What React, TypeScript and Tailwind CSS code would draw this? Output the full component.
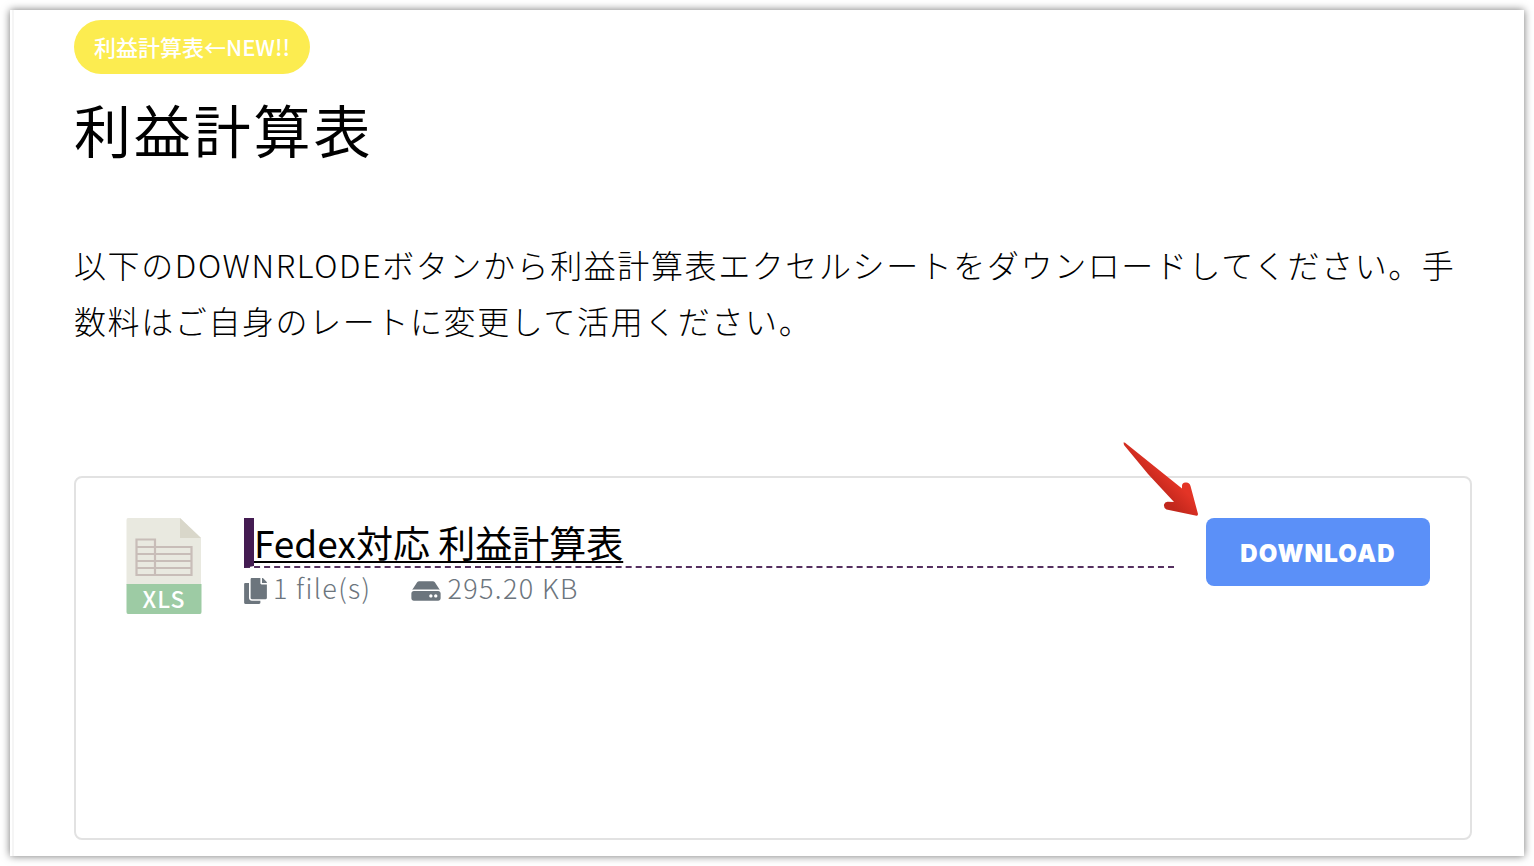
import { FaCopy, FaHdd } from "react-icons/fa";

function XlsIcon() {
  return (
    <svg viewBox="0 0 96 96" className="size-24 shrink-0 overflow-visible" role="img" aria-label="XLS">
      <path d="M12 0H64L85 20V67H10.500V2Q10.500 0 12 0Z" fill="#e9e9e0" />
      <path d="M64 0L85 20H64Z" fill="#d9d7ca" />
      <path d="M10.500 66H85.500V94Q85.500 96 84 96H12Q10.500 96 10.500 94Z" fill="#9dcba4" />
      <g fill="none" stroke="#c8bdb8" strokeWidth="2.200">
        <path d="M20.500 21.500H39V57H20.500Z" />
        <path d="M39 29H75.500V57H39" />
        <path d="M20.500 29H39M20.500 36H75.500M20.500 43H75.500M20.500 50H75.500" />
      </g>
      <text
        x="48"
        y="90"
        textAnchor="middle"
        fill="#ffffff"
        fontSize="23"
        fontWeight="500"
        fontFamily="'Noto Sans CJK JP', sans-serif"
        letterSpacing="1"
      >
        XLS
      </text>
    </svg>
  );
}

function Arrow() {
  return (
    <svg viewBox="0 0 80 80" className="absolute -top-[38px] right-[270px] size-20" aria-hidden="true">
      <defs>
        <linearGradient id="arrow-red" gradientUnits="userSpaceOnUse" x1="44" y1="58" x2="58" y2="44">
          <stop offset="0" stopColor="#c1271c" />
          <stop offset="1" stopColor="#e33426" />
        </linearGradient>
      </defs>
      <path
        d="M3.500 2.500Q5 2 6 3.500L62 48.500L62 46Q62 42.500 65.500 42.500Q69.500 42 70.500 46L78 74Q78 76 76.500 75.800L46.500 69.500Q43.500 68 44 64.500Q45 61.500 48 61.800L54 62L28 34L4 5Z"
        fill="url(#arrow-red)"
      />
    </svg>
  );
}

export default function App() {
  return (
    <div className="p-[10px] font-['Noto_Sans_CJK_JP',sans-serif] text-black" lang="ja">
      <main className="border-l-2 border-white bg-white pt-[10px] pr-[52px] pb-4 pl-[62px] shadow-[0_0_8px_rgba(0,0,0,0.55),inset_2px_0_0_#f5f5f5]">
        <a
          href="#new"
          className="inline-flex h-[54px] items-center rounded-full bg-[#fcec50] px-5 pb-[2px] text-[22px] font-medium text-white"
        >
          利益計算表←NEW!!
        </a>
        <h1 className="mt-4 text-[57px] leading-[76px] tracking-wider">利益計算表</h1>
        <p className="mt-[70px] text-[32px] leading-[56px] font-light tracking-wider text-black">
          以下のDOWNRLODEボタンから利益計算表エクセルシートをダウンロードしてください。手数料はご自身のレートに変更して活用ください。
        </p>
        <section className="relative mt-[128px] flex min-h-[364px] items-start gap-8 rounded-lg border-2 border-[#e2e2e2] p-10">
          <XlsIcon />
          <div className="min-w-0 flex-1">
            <h2 className="border-b-2 border-l-10 border-b-[#553060] border-l-[#441c52] text-[37px] leading-[48px] [border-bottom-style:dashed]">
              <a href="#profit-sheet" className="underline decoration-2 underline-offset-3">
                Fedex対応 利益計算表
              </a>
            </h2>
            <div className="flex gap-10 text-[27px] leading-[40px] font-light tracking-wider text-[#6c757d]">
              <span className="flex items-center gap-[6px]">
                <FaCopy className="mt-[6px] h-[26px] w-[23px]" />1 file(s)
              </span>
              <span className="flex items-center gap-[6px]">
                <FaHdd className="mt-[6px] h-[26px] w-[30px]" />
                295.20 KB
              </span>
            </div>
          </div>
          <button
            type="button"
            className="h-[68px] w-56 shrink-0 rounded-lg bg-[#5b90f8] pt-[3px] font-['Inter',sans-serif] text-[24px] font-black tracking-wider text-white"
          >
            DOWNLOAD
          </button>
          <Arrow />
        </section>
      </main>
    </div>
  );
}
